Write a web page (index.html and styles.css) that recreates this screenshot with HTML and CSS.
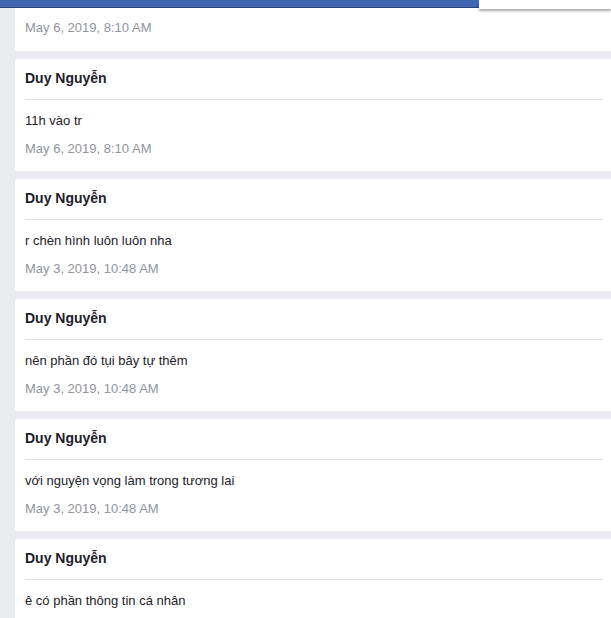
FILE: index.html
```html
<!DOCTYPE html>
<html lang="vi">
<head>
<meta charset="utf-8">
<title>Messages</title>
<link rel="stylesheet" href="styles.css">
</head>
<body>
<div class="topbar"><div class="topbar-panel"></div></div>
<div class="list">
  <div class="card card-partial">
    <div class="date">May 6, 2019, 8:10 AM</div>
  </div>
  <div class="card">
    <div class="name">Duy Nguyễn</div>
    <div class="msg">11h vào tr</div>
    <div class="date">May 6, 2019, 8:10 AM</div>
  </div>
  <div class="card">
    <div class="name">Duy Nguyễn</div>
    <div class="msg">r chèn hình luôn luôn nha</div>
    <div class="date">May 3, 2019, 10:48 AM</div>
  </div>
  <div class="card">
    <div class="name">Duy Nguyễn</div>
    <div class="msg">nên phần đó tụi bây tự thêm</div>
    <div class="date">May 3, 2019, 10:48 AM</div>
  </div>
  <div class="card">
    <div class="name">Duy Nguyễn</div>
    <div class="msg">với nguyện vọng làm trong tương lai</div>
    <div class="date">May 3, 2019, 10:48 AM</div>
  </div>
  <div class="card">
    <div class="name">Duy Nguyễn</div>
    <div class="msg">ê có phần thông tin cá nhân</div>
  </div>
</div>
</body>
</html>
```
FILE: styles.css
```css
html, body {
  margin: 0;
  padding: 0;
}
body {
  background: #e9ebee;
  font-family: "Liberation Sans", Arial, sans-serif;
  color: #1d2129;
  overflow: hidden;
  height: 618px;
}
.topbar {
  position: fixed;
  top: 0;
  left: 0;
  right: 0;
  height: 7px;
  background: #4267b2;
  border-bottom: 1px solid #29487d;
  z-index: 10;
}
.topbar-panel {
  position: absolute;
  top: 0;
  left: 479px;
  right: 0;
  height: 9px;
  background: #fff;
  box-shadow: 0 2px 3px rgba(0, 0, 0, 0.35);
}
.list {
  margin-left: 15px;
  width: 598px;
  display: flex;
  flex-direction: column;
  gap: 8px;
}
.card {
  background: #fff;
  border-radius: 3px;
  padding: 0 10px 13px;
  height: 112px;
  box-sizing: border-box;
  flex: none;
}
.card-partial {
  height: 51px;
  padding-top: 9px;
  border-radius: 0 0 3px 3px;
}
.name {
  height: 38px;
  line-height: 38px;
  padding-bottom: 2px;
  font-size: 14px;
  font-weight: bold;
  border-bottom: 1px solid #dddfe2;
}
.msg {
  margin-top: 12px;
  font-size: 13px;
  line-height: 18px;
}
.date {
  margin-top: 10px;
  font-size: 13px;
  line-height: 18px;
  color: #90949c;
}
```
